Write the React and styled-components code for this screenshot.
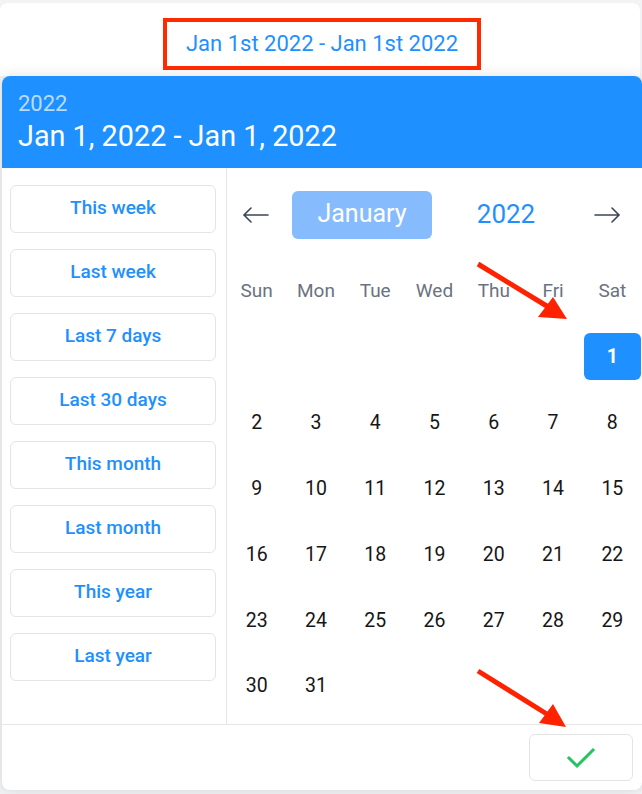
import React from "react";
import styled, { createGlobalStyle } from "styled-components";

const Global = createGlobalStyle`
  html, body { margin: 0; padding: 0; background: #f1f3f5; }
  body { font-family: Roboto, "Noto Sans", Arial, sans-serif; }
  * { box-sizing: border-box; }
`;

const Page = styled.div`
  position: relative;
  width: 642px;
  height: 794px;
  padding-top: 3px;
  overflow: hidden;
`;

const TopCard = styled.div`
  width: 640px;
  height: 73px;
  background: #fff;
  border-radius: 8px 8px 0 0;
  display: flex;
  justify-content: center;
  padding-top: 15px;
  padding-left: 4px;
`;

const Trigger = styled.div`
  height: 52px;
  width: 318px;
  border: 4px solid #ff2a00;
  display: flex;
  align-items: center;
  justify-content: center;
  color: #1e90ff;
  font-size: 22px;
  padding-bottom: 2px;
`;

const Popup = styled.div`
  margin-left: 2px;
  width: 640px;
  height: 714px;
  background: #fff;
  border-radius: 8px;
  box-shadow: 0 0 14px rgba(0, 0, 0, 0.12);
  display: flex;
  flex-direction: column;
  overflow: hidden;
`;

const Header = styled.div`
  height: 92px;
  background: #1e90ff;
  padding: 15px 16px 0;
  display: flex;
  flex-direction: column;
`;

const HeaderYear = styled.div`
  font-size: 22px;
  line-height: 26px;
  color: rgba(255, 255, 255, 0.7);
`;

const HeaderRange = styled.div`
  font-size: 28.8px;
  line-height: 36px;
  color: #fff;
  margin-top: 1px;
`;

const Body = styled.div`
  display: flex;
  height: 556px;
`;

const Presets = styled.div`
  width: 225px;
  border-right: 1px solid #e6e6e6;
  padding: 17px 10px 0 8px;
  display: flex;
  flex-direction: column;
  gap: 16px;
`;

const PresetButton = styled.div`
  height: 48px;
  border: 1px solid #e4e4e4;
  border-radius: 6px;
  display: flex;
  align-items: center;
  justify-content: center;
  color: #1e90ff;
  font-size: 19px;
  font-weight: 500;
  padding-bottom: 3px;
`;

const Calendar = styled.div`
  flex: 1;
  padding-top: 23px;
  display: flex;
  flex-direction: column;
`;

const Nav = styled.div`
  display: flex;
  align-items: center;
  height: 48px;
`;

const ArrowBtn = styled.div`
  width: ${(p) => p.$w}px;
  display: flex;
  justify-content: center;
  align-items: center;
  color: #3d4653;
`;

const MonthBtn = styled.div`
  width: 140px;
  height: 48px;
  margin-left: 7px;
  border-radius: 6px;
  background: #86bcfd;
  color: #fff;
  font-size: 25px;
  display: flex;
  align-items: center;
  justify-content: center;
  padding-bottom: 3px;
`;

const YearLabel = styled.div`
  width: 148px;
  text-align: center;
  color: #1e90ff;
  font-size: 26px;
  padding-bottom: 3px;
`;

const Grid = styled.div`
  display: grid;
  grid-template-columns: repeat(7, 1fr);
`;

const WeekRow = styled(Grid)`
  margin-top: 39px;
  height: 24px;
  align-items: center;
`;

const WeekDay = styled.div`
  text-align: center;
  color: #6b7280;
  font-size: 19px;
`;

const Days = styled(Grid)`
  margin-top: 31px;
  grid-auto-rows: 48px;
  row-gap: 17.8px;
`;

const Day = styled.div`
  display: flex;
  align-items: center;
  justify-content: center;
  font-size: 19.5px;
  color: #161616;
  margin: 0 1px 0 1px;
  border-radius: 6px;
  ${(p) =>
    p.$selected &&
    `background: #1e90ff; color: #fff; font-weight: 700; height: 47px;`}
`;

const Footer = styled.div`
  flex: 1;
  border-top: 1px solid #e6e6e6;
  display: flex;
  justify-content: flex-end;
  padding: 9px 9px 0 0;
`;

const ConfirmBtn = styled.div`
  width: 104px;
  height: 47px;
  border: 1px solid #e4e4e4;
  border-radius: 6px;
  display: flex;
  align-items: center;
  justify-content: center;
`;

const Annotations = styled.svg`
  position: absolute;
  left: 0;
  top: 0;
  pointer-events: none;
`;

const presets = [
  "This week",
  "Last week",
  "Last 7 days",
  "Last 30 days",
  "This month",
  "Last month",
  "This year",
  "Last year",
];

const weekdays = ["Sun", "Mon", "Tue", "Wed", "Thu", "Fri", "Sat"];

const LeftArrow = () => (
  <svg width="28" height="16" viewBox="0 0 28 16" fill="none" stroke="currentColor" strokeWidth="1.6" strokeLinecap="round">
    <path d="M26 8H2M9 1L2 8l7 7" />
  </svg>
);
const RightArrow = () => (
  <svg width="28" height="16" viewBox="0 0 28 16" fill="none" stroke="currentColor" strokeWidth="1.6" strokeLinecap="round">
    <path d="M2 8h24M19 1l7 7-7 7" />
  </svg>
);

export default function App() {
  const cells = [];
  for (let i = 0; i < 6; i++) cells.push(null);
  for (let d = 1; d <= 31; d++) cells.push(d);

  return (
    <Page>
      <Global />
      <TopCard>
        <Trigger>Jan 1st 2022 - Jan 1st 2022</Trigger>
      </TopCard>
      <Popup>
        <Header>
          <HeaderYear>2022</HeaderYear>
          <HeaderRange>Jan 1, 2022 - Jan 1, 2022</HeaderRange>
        </Header>
        <Body>
          <Presets>
            {presets.map((p) => (
              <PresetButton key={p}>{p}</PresetButton>
            ))}
          </Presets>
          <Calendar>
            <Nav>
              <ArrowBtn $w={58}>
                <LeftArrow />
              </ArrowBtn>
              <MonthBtn>January</MonthBtn>
              <YearLabel>2022</YearLabel>
              <ArrowBtn $w={54}>
                <RightArrow />
              </ArrowBtn>
            </Nav>
            <WeekRow>
              {weekdays.map((w) => (
                <WeekDay key={w}>{w}</WeekDay>
              ))}
            </WeekRow>
            <Days>
              {cells.map((d, i) =>
                d === null ? (
                  <div key={"e" + i} />
                ) : (
                  <Day key={d} $selected={d === 1}>
                    {d}
                  </Day>
                )
              )}
            </Days>
          </Calendar>
        </Body>
        <Footer>
          <ConfirmBtn>
            <svg width="30" height="22" viewBox="0 0 30 22" fill="none" stroke="#22c55e" strokeWidth="3" strokeLinecap="square">
              <path d="M3 11l8 8L27 3" />
            </svg>
          </ConfirmBtn>
        </Footer>
      </Popup>
      <Annotations width="642" height="794" viewBox="0 0 642 794">
        <g stroke="#ff2200" strokeWidth="5" fill="#ff2200">
          <line x1="478" y1="264" x2="550" y2="308" />
          <polygon points="567,319 538,317 553,297" stroke="none" />
          <line x1="478" y1="671" x2="550" y2="716" />
          <polygon points="566,727 539,723 553,704" stroke="none" />
        </g>
      </Annotations>
    </Page>
  );
}
